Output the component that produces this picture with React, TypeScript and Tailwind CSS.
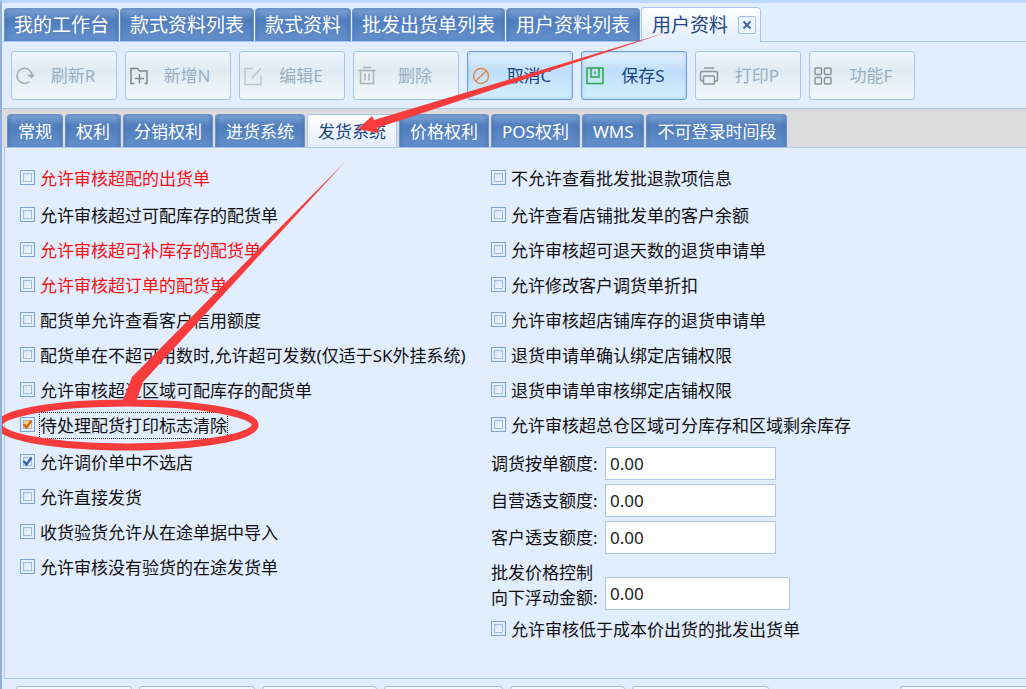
import type { ReactNode } from 'react';

const topTabs = ['我的工作台', '款式资料列表', '款式资料', '批发出货单列表', '用户资料列表'];

const subTabs = ['常规', '权利', '分销权利', '进货系统', '发货系统', '价格权利', 'POS权利', 'WMS', '不可登录时间段'];

type Tool = { label: string; icon: ReactNode; enabled?: boolean; color: string };

const tools: Tool[] = [
  {
    label: '刷新R',
    color: 'text-[#a3acb2]',
    icon: (
      <>
        <path d="M14.5 15.5A7.5 7.5 0 1 1 17 9" />
        <path d="M12 8.500h8L16.500 12.500z" fill="currentColor" stroke="none" />
      </>
    ),
  },
  {
    label: '新增N',
    color: 'text-[#7f8a90]',
    icon: (
      <>
        <path d="M5.500 17.500H2V2.500h6.500l2 2.500h7.500v12.500h-2.500" />
        <path d="M10.500 8v9.500M6 12.500h9" />
      </>
    ),
  },
  {
    label: '编辑E',
    color: 'text-[#bcc6cb]',
    icon: (
      <>
        <path d="M10 2.500H2v16h16V10" />
        <path d="M8.500 12.500L18 2.500" />
      </>
    ),
  },
  {
    label: '删除',
    color: 'text-[#a9b3b9]',
    icon: <path d="M1.500 4.500h17M6 1.500h8M3.500 4.500v13h13v-13M8 7.500v7M12 7.500v7" />,
  },
  {
    label: '取消C',
    color: 'text-[#e58a45]',
    enabled: true,
    icon: (
      <>
        <circle cx="10" cy="10" r="7.500" />
        <path d="M4.700 15L15.300 5" />
      </>
    ),
  },
  {
    label: '保存S',
    color: 'text-[#27a844]',
    enabled: true,
    icon: (
      <>
        <path d="M2 2h16v15.500H2z" />
        <path d="M6 2v9h8V2M10 5.500v2.500" />
      </>
    ),
  },
  {
    label: '打印P',
    color: 'text-[#8b949a]',
    icon: (
      <>
        <path d="M5 2h10M4.500 15H3q-1.500 0-1.500-1.500V7q0-1.500 1.500-1.500h14q1.500 0 1.500 1.500v6.500q0 1.500-1.500 1.500h-1.500" />
        <rect x="4.500" y="10" width="11" height="8" rx="1" />
      </>
    ),
  },
  {
    label: '功能F',
    color: 'text-[#8b949a]',
    icon: (
      <>
        <rect x="2" y="2" width="6.500" height="6.500" rx="1" />
        <rect x="11.500" y="2" width="6.500" height="6.500" rx="1" />
        <rect x="2" y="11.500" width="6.500" height="6.500" rx="1" />
        <rect x="11.500" y="11.500" width="6.500" height="6.500" rx="1" />
      </>
    ),
  },
];

type Option = { label: string; red?: boolean; checked?: boolean; focused?: boolean };

const leftGroups: Option[][] = [
  [{ label: '允许审核超配的出货单', red: true }],
  [
    { label: '允许审核超过可配库存的配货单' },
    { label: '允许审核超可补库存的配货单', red: true },
    { label: '允许审核超订单的配货单', red: true },
    { label: '配货单允许查看客户信用额度' },
    { label: '配货单在不超可用数时,允许超可发数(仅适于SK外挂系统)' },
    { label: '允许审核超过区域可配库存的配货单' },
    { label: '待处理配货打印标志清除', checked: true, focused: true },
  ],
  [
    { label: '允许调价单中不选店', checked: true },
    { label: '允许直接发货' },
    { label: '收货验货允许从在途单据中导入' },
    { label: '允许审核没有验货的在途发货单' },
  ],
];

const rightGroups: Option[][] = [
  [{ label: '不允许查看批发批退款项信息' }],
  [
    { label: '允许查看店铺批发单的客户余额' },
    { label: '允许审核超可退天数的退货申请单' },
    { label: '允许修改客户调货单折扣' },
    { label: '允许审核超店铺库存的退货申请单' },
    { label: '退货申请单确认绑定店铺权限' },
    { label: '退货申请单审核绑定店铺权限' },
    { label: '允许审核超总仓区域可分库存和区域剩余库存' },
  ],
];

const amounts = ['调货按单额度:', '自营透支额度:', '客户透支额度:'];

const tabBlue =
  'border border-b-0 border-[#6b93c8] bg-linear-to-b from-[#7fa3d3] via-[#4f7dbd] via-35% to-[#6590cc] text-white shadow-[inset_2px_0_3px_#3f6cae55,inset_-2px_0_3px_#3f6cae55]';
const tabActive = 'border border-b-0 border-[#a9c8ee] bg-linear-to-b from-white to-[#e2edfe] text-[#1c4680]';

function CheckRow({ label, red, checked, focused }: Option) {
  return (
    <label className={`flex h-[35px] items-center gap-1 whitespace-nowrap ${red ? 'text-[#f80d12]' : 'text-[#111]'}`}>
      <span className="mb-[2px] grid size-[16px] shrink-0">
        <input
          type="checkbox"
          defaultChecked={checked}
          className={`peer col-start-1 row-start-1 size-[15px] appearance-none border border-[#7aa4d8] bg-linear-to-br shadow-[inset_0_0_0_2px_#e4effd,inset_0_0_0_3px_#9dbde3] ${
            focused ? 'from-[#ffc75c] to-[#fff0c4]' : 'from-[#c9dcf3] to-white'
          }`}
        />
        <svg
          viewBox="0 0 15 15"
          className={`pointer-events-none col-start-1 row-start-1 hidden size-[15px] fill-none peer-checked:block ${
            focused ? 'stroke-[#e0660b]' : 'stroke-[#3468ad]'
          }`}
          strokeWidth="2.4"
        >
          <path d="M3.500 7L6.500 10.500L11.500 3.500" />
        </svg>
      </span>
      <span className={focused ? 'outline-1 outline-dotted outline-[#222]' : ''}>{label}</span>
    </label>
  );
}

function Groups({ groups }: { groups: Option[][] }) {
  return (
    <>
      {groups.map((group, i) => (
        <div key={i}>
          {group.map((option) => (
            <CheckRow key={option.label} {...option} />
          ))}
        </div>
      ))}
    </>
  );
}

const inputStyle = 'h-[33px] border border-[#aec6ea] bg-white px-1 text-[17px] text-[#222] outline-none';

export default function App() {
  return (
    <div className="relative flex min-h-screen flex-col overflow-hidden border-t-[3px] border-l-2 border-t-[#bcd8ff] border-l-[#8fb0dd] bg-[#e2edfe] font-['Noto_Sans','Noto_Sans_CJK_SC',sans-serif] text-[17px] leading-[25px]">
      {/* Open documents */}
      <nav className="flex items-end gap-px border-b border-[#a5c6ee] pt-1 pl-[2px] text-[19px]">
        {topTabs.map((tab) => (
          <button key={tab} type="button" className={`h-[33px] rounded-t-[4px] px-[9px] whitespace-nowrap ${tabBlue}`}>
            {tab}
          </button>
        ))}
        <div className={`-mb-px flex h-[35px] items-center gap-[10px] rounded-t-[4px] pr-1 pl-[10px] ${tabActive}`}>
          <button type="button" className="whitespace-nowrap">
            用户资料
          </button>
          <button
            type="button"
            aria-label="关闭"
            className="grid size-[18px] place-items-center rounded-[2px] border border-[#a3bfe4] bg-[#edf4fe]"
          >
            <svg viewBox="0 0 10 10" className="size-[10px] stroke-[#3c68a5]" strokeWidth="2">
              <path d="M1.500 1.500L8.500 8.500M8.500 1.500L1.500 8.500" />
            </svg>
          </button>
        </div>
      </nav>

      {/* Toolbar */}
      <div className="flex gap-2 border-b border-[#a5c6ee] pt-[9px] pb-2 pl-[9px]">
        {tools.map((tool) => (
          <button
            key={tool.label}
            type="button"
            disabled={!tool.enabled}
            className={`flex h-[49px] w-[106px] items-center rounded-[3px] border pr-[5px] pl-[3px] ${
              tool.enabled
                ? 'border-[#6a9ddd] bg-linear-to-b from-[#e6f2fe] via-[#c0def9] via-40% to-[#d2f1ff] text-[#1c4680] shadow-[inset_0_0_4px_#a3caf0]'
                : 'border-[#a9c6e8] bg-linear-to-b from-[#eff6fc] via-[#e0ebf1] via-40% to-[#f1f8fb] text-[#98afc4]'
            }`}
          >
            <svg viewBox="0 0 20 20" className={`size-5 shrink-0 fill-none stroke-current ${tool.color}`} strokeWidth="1.500">
              {tool.icon}
            </svg>
            <span className="grow text-center">{tool.label}</span>
          </button>
        ))}
      </div>

      {/* Section tabs */}
      <nav className="flex items-end gap-[2px] bg-[#dcdcdc] pt-[5px] pl-[5px]">
        {subTabs.map((tab) => (
          <button
            key={tab}
            type="button"
            className={`h-[33px] rounded-t-[4px] px-[10px] whitespace-nowrap ${tab === '发货系统' ? tabActive : tabBlue}`}
          >
            {tab}
          </button>
        ))}
      </nav>

      <main className="ml-[2px] grid grow grid-cols-[minmax(0,471px)_1fr] border border-r-0 border-[#a9c8ee] pt-[13px] pb-7 pl-[15px]">
        <div className="flex flex-col gap-[2px]">
          <Groups groups={leftGroups} />
        </div>
        <div className="flex flex-col gap-[2px]">
          <Groups groups={rightGroups} />
          <div className="flex flex-col gap-1 pt-[2px] text-[#111]">
            {amounts.map((label) => (
              <label key={label} className="flex items-center">
                <span className="w-[114px] whitespace-nowrap">{label}</span>
                <input type="text" defaultValue="0.00" className={`w-[171px] ${inputStyle}`} />
              </label>
            ))}
            <label className="flex items-end pt-[2px]">
              <span className="w-[114px]">
                批发价格控制
                <br />
                向下浮动金额:
              </span>
              <input type="text" defaultValue="0.00" className={`w-[185px] ${inputStyle}`} />
            </label>
          </div>
          <CheckRow label="允许审核低于成本价出货的批发出货单" />
        </div>
      </main>

      {/* Top edge of the record buttons */}
      <footer className="-mb-[30px] flex gap-[7px] pt-[7px] pl-[14px]">
        {['w-[116px]', 'w-[116px]', 'w-[115px]', 'w-[119px]', 'w-[115px]', 'w-[137px]'].map((width, i) => (
          <div key={i} className={`h-[33px] rounded-[3px] border border-[#a8bdd6] bg-[#f2f8fe] ${width}`} />
        ))}
        <div className="ml-auto h-[33px] w-[126px] rounded-l-[3px] border border-r-0 border-[#a8bdd6] bg-[#f2f8fe]" />
      </footer>

      {/* Hand-drawn arrows and ring */}
      <svg
        viewBox="0 0 1026 689"
        className="pointer-events-none absolute -top-[3px] -left-[2px] h-[689px] w-[1026px] fill-[#f83b3b]"
      >
        <path d="M668 32L374 120L372 116L358 129L378 133L377 128Z" />
        <path d="M345 162L132 377L122 402L136 402L143 382Z" />
        <ellipse cx="127" cy="425" rx="128" ry="22" fill="none" stroke="#f83b3b" strokeWidth="7" />
      </svg>
    </div>
  );
}
